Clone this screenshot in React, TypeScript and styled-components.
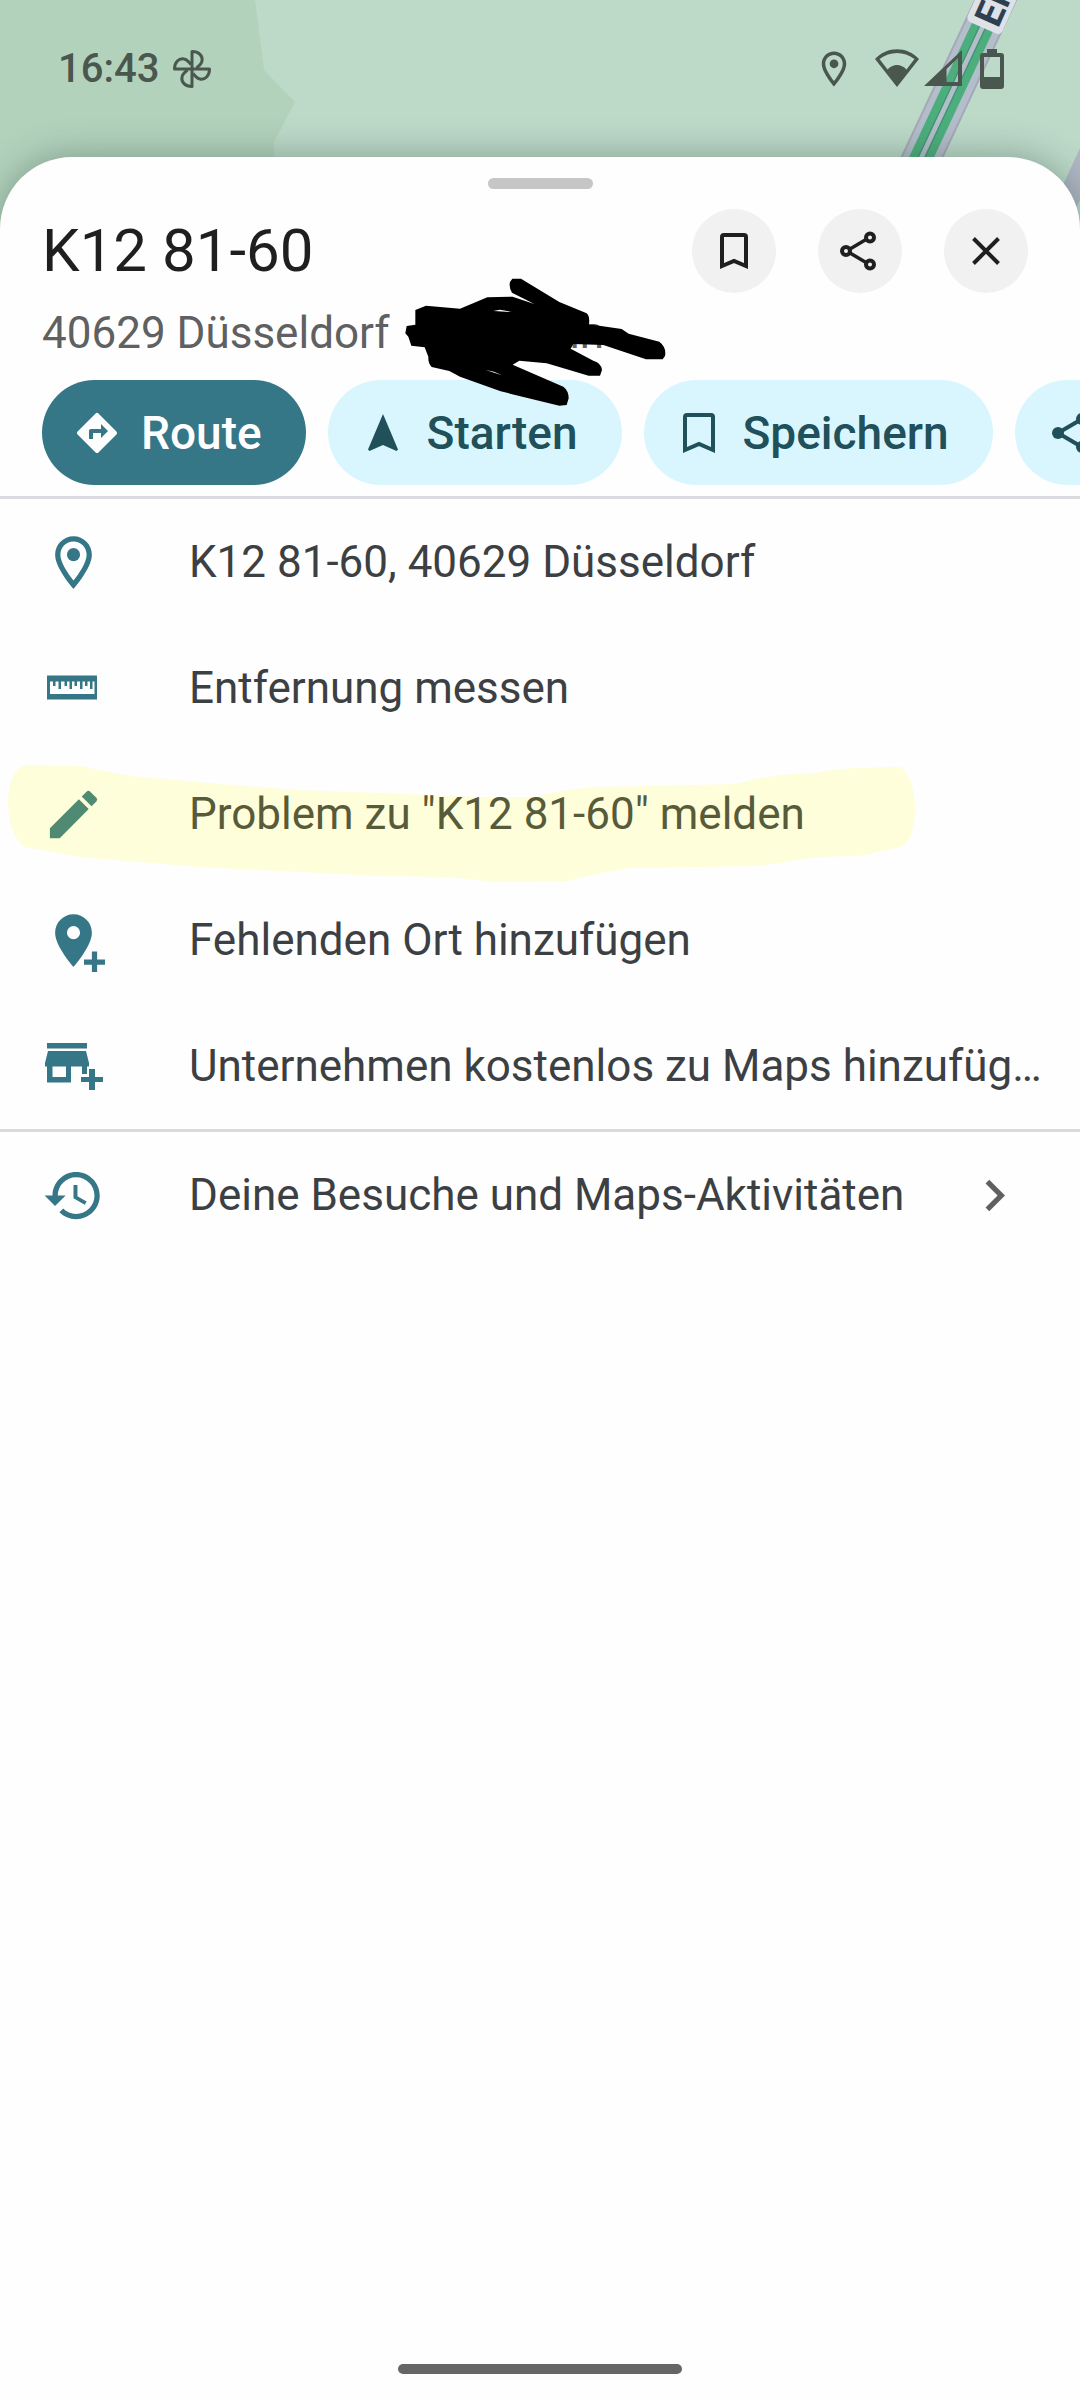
import React from "react";
import styled, { createGlobalStyle, css } from "styled-components";

const TEAL = "#357786";
const DEEP_TEAL = "#20505a";

const GlobalStyle = createGlobalStyle`
  * { box-sizing: border-box; }
  body {
    margin: 0;
    background: #bdd9c8;
    font-family: Roboto, "Liberation Sans", sans-serif;
  }
  button { font: inherit; border: 0; cursor: pointer; }
`;

const Screen = styled.div`
  position: relative;
  display: flex;
  flex-direction: column;
  min-height: 100vh;
  overflow: hidden;
`;

const MapBackdrop = styled.svg`
  position: absolute;
  top: 0;
  right: 0;
  width: 1080px;
  height: 240px;
`;

const StatusBar = styled.header`
  position: relative;
  display: flex;
  align-items: center;
  justify-content: space-between;
  height: 157px;
  padding: 0 68px 20px 58px;
  color: #4a574e;
`;

const StatusGroup = styled.div<{ $gap: number }>`
  display: flex;
  align-items: center;
  gap: ${(p) => p.$gap}px;
`;

const Clock = styled.time`
  font-size: 40px;
  font-weight: 500;
`;

const Sheet = styled.main`
  position: relative;
  display: flex;
  flex: 1;
  flex-direction: column;
  border-radius: 72px 72px 0 0;
  background: #fefefe;
  box-shadow: 0 0 36px rgba(40, 70, 60, 0.4);
`;

const Handle = styled.div`
  width: 105px;
  height: 11px;
  margin: 21px auto 20px;
  border-radius: 6px;
  background: #c6c6c6;
`;

const TitleRow = styled.div`
  display: flex;
  align-items: center;
  justify-content: space-between;
  padding: 0 52px 0 42px;
`;

const Title = styled.h1`
  margin: 0;
  color: #1f1f1f;
  font-size: 60px;
  font-weight: 400;
  line-height: 84px;
`;

const Actions = styled.div`
  display: flex;
  gap: 42px;
`;

const RoundButton = styled.button`
  display: grid;
  place-items: center;
  width: 84px;
  height: 84px;
  padding: 0;
  border-radius: 50%;
  background: #f1f1f1;
  color: #1f1f1f;
`;

const Subtitle = styled.div`
  position: relative;
  z-index: 1;
  display: flex;
  gap: 141px;
  margin: 14px 42px 21px;
  color: #5f6061;
  font-size: 44px;
  line-height: 52px;
`;

const Scribble = styled.svg`
  position: absolute;
  top: -37px;
  left: 358px;
  width: 280px;
  height: 150px;
`;

const ChipRow = styled.nav`
  display: flex;
  gap: 22px;
  padding: 0 0 11px 42px;
  overflow: hidden;
  border-bottom: 3px solid #dadbe0;
`;

const Chip = styled.button<{ $primary?: boolean }>`
  display: flex;
  flex: none;
  align-items: center;
  gap: 20px;
  height: 105px;
  padding: 0 44px 0 31px;
  border-radius: 53px;
  background: ${(p) => (p.$primary ? TEAL : "#d9f6fe")};
  color: ${(p) => (p.$primary ? "#ffffff" : DEEP_TEAL)};
  font-size: 46px;
  font-weight: 500;
`;

const List = styled.ul`
  margin: 0;
  padding: 0;
  list-style: none;

  & + & {
    border-top: 3px solid #dadadb;
  }
`;

const ListItem = styled.li`
  position: relative;
`;

const RowButton = styled.button`
  display: flex;
  align-items: center;
  width: 100%;
  height: 126px;
  padding: 0 36px 0 42px;
  background: transparent;
  color: ${TEAL};
  text-align: left;
`;

const Label = styled.span`
  flex: 1;
  min-width: 0;
  margin-left: 84px;
  overflow: hidden;
  color: #3c4043;
  font-size: 44px;
  line-height: 60px;
  text-overflow: ellipsis;
  white-space: nowrap;
`;

const Trailing = styled.span`
  display: flex;
  margin: 0 18px 0 24px;
`;

const Marker = styled.svg`
  position: absolute;
  top: -11px;
  left: 0;
  width: 1080px;
  height: 160px;
  pointer-events: none;
`;

const HomeBar = styled.div`
  width: 284px;
  height: 10px;
  margin: auto auto 26px;
  border-radius: 5px;
  background: #666666;
`;

const Glyph = styled.svg<{ $size: number; $tone?: string }>`
  flex: none;
  width: ${(p) => p.$size}px;
  height: ${(p) => p.$size}px;
  fill: currentColor;
  ${(p) => p.$tone && css`color: ${p.$tone};`}
`;

const PIN =
  "M12 2C8.13 2 5 5.13 5 9c0 5.25 7 13 7 13s7-7.75 7-13c0-3.87-3.13-7-7-7z";

const PinOutline = ({ size }: { size: number }) => (
  <Glyph $size={size} viewBox="0 0 24 24" aria-hidden="true">
    <path
      fillRule="evenodd"
      d={`${PIN}M7 9c0-2.76 2.24-5 5-5s5 2.24 5 5c0 2.88-2.88 7.19-5 9.88C9.92 16.21 7 11.85 7 9z`}
    />
    <circle cx="12" cy="9" r="2.5" />
  </Glyph>
);

const Fan = () => (
  <Glyph $size={40} viewBox="0 0 40 40" aria-hidden="true">
    <g fill="none" stroke="currentColor" strokeWidth="3" strokeLinejoin="round">
      {[0, 90, 180, 270].map((angle) => (
        <path
          key={angle}
          transform={`rotate(${angle} 20 20)`}
          d="M20 20V2.500C27 2.500 31 7 30 12C29.500 15 27 17 24.500 19"
        />
      ))}
    </g>
  </Glyph>
);

const Wifi = () => (
  <Glyph $size={44} viewBox="0 0 44 44" aria-hidden="true">
    <path
      fillRule="evenodd"
      d="M22 40L0 12C12 -1 32 -1 44 12zM12.500 22.500C18 16.500 26 16.500 31.500 22.500L39.500 12C29 4 15 4 4.500 12z"
    />
  </Glyph>
);

const Signal = () => (
  <Glyph $size={38} viewBox="0 0 38 38" aria-hidden="true">
    <path fillRule="evenodd" d="M0 36L38 0V36zM22.500 19V32H34V8z" />
  </Glyph>
);

const Battery = () => (
  <Glyph $size={40} viewBox="0 0 40 40" aria-hidden="true">
    <path
      fillRule="evenodd"
      d="M15 0h10v4h4q3 0 3 3v30q0 3-3 3H11q-3 0-3-3V7q0-3 3-3h4zM12 8v20h16V8z"
    />
  </Glyph>
);

const Bookmark = ({ size, stroke }: { size: number; stroke: number }) => (
  <Glyph $size={size} viewBox="0 0 24 24" aria-hidden="true">
    <path
      fill="none"
      stroke="currentColor"
      strokeWidth={stroke}
      d="M6 19.500V5q0-1 1-1h10q1 0 1 1v14.500L12 17z"
    />
  </Glyph>
);

const BookmarkWide = () => (
  <Glyph $size={48} viewBox="0 0 48 48" aria-hidden="true">
    <path
      fill="none"
      stroke="currentColor"
      strokeWidth="4"
      d="M10 41V8q0-2 2-2h24q2 0 2 2v33L24 35z"
    />
  </Glyph>
);

const ShareOutline = () => (
  <Glyph $size={48} viewBox="0 0 48 48" aria-hidden="true">
    <g fill="none" stroke="currentColor" strokeWidth="4">
      <circle cx="34" cy="10.500" r="4" />
      <circle cx="10" cy="24" r="4" />
      <circle cx="34" cy="37.500" r="4" />
      <path d="M14 22L30 12.500M14 26L30 35.500" strokeWidth="3.500" />
    </g>
  </Glyph>
);

const ShareFilled = () => (
  <Glyph $size={48} viewBox="0 0 48 48" aria-hidden="true">
    <path d="M12 24L36 10M12 24L36 38" stroke="currentColor" strokeWidth="4" />
    <circle cx="12" cy="24" r="6" />
    <circle cx="36" cy="10" r="6" />
    <circle cx="36" cy="38" r="6" />
  </Glyph>
);

const Close = () => (
  <Glyph $size={48} viewBox="0 0 48 48" aria-hidden="true">
    <path d="M11.500 11.500L36.500 36.500M36.500 11.500L11.500 36.500" stroke="currentColor" strokeWidth="4" />
  </Glyph>
);

const Directions = () => (
  <Glyph $size={48} viewBox="0 0 24 24" aria-hidden="true">
    <path d="M21.710 11.290l-9-9a1 1 0 0 0-1.420 0l-9 9a1 1 0 0 0 0 1.420l9 9c.39.39 1.010.39 1.420 0l9-9a1 1 0 0 0 0-1.420zM14 14.500V12h-4v3H8v-4c0-.55.45-1 1-1h5V7.500l3.500 3.500-3.500 3.500z" />
  </Glyph>
);

const Navigate = () => (
  <Glyph $size={48} viewBox="0 0 48 48" aria-hidden="true">
    <path d="M24 5L9 40.500L10.500 42L24 36L37.500 42L39 40.500z" />
  </Glyph>
);

const Ruler = () => (
  <Glyph $size={63} viewBox="0 0 63 63" aria-hidden="true">
    <path
      fillRule="evenodd"
      d="M5 18.500H55V42.500H5zM8 24.500V37H52.500V24.500H50.500V32H48V24.500H45.500V29H43V24.500H40.500V32H38V24.500H35V29H32.500V24.500H30V32H27.500V24.500H25V29H22.500V24.500H19V32H16.500V24.500H13.500V29H11V24.500z"
    />
  </Glyph>
);

const Pencil = () => (
  <Glyph $size={63} viewBox="0 0 24 24" aria-hidden="true">
    <path d="M3 17.250V21h3.750L17.810 9.940l-3.750-3.750L3 17.250zM20.710 7.040a1 1 0 0 0 0-1.410l-2.340-2.340a1 1 0 0 0-1.410 0l-1.830 1.830 3.750 3.750 1.830-1.830z" />
  </Glyph>
);

const PinAdd = () => (
  <Glyph $size={63} viewBox="0 0 24 24" aria-hidden="true">
    <path fillRule="evenodd" d={`${PIN}M12 11.500a2.500 2.500 0 1 0 0-5 2.500 2.500 0 0 0 0 5z`} />
    <path d="M19 16.200h2v3h3v2h-3v3h-2v-3h-3v-2h3z" />
  </Glyph>
);

const StoreAdd = () => (
  <Glyph $size={63} viewBox="0 0 63 63" aria-hidden="true">
    <path
      fillRule="evenodd"
      d="M5 8H45V13.500H5zM6 16H44L47 28V31.500H45V39H40V31.500H29V47.500H5V31.500H3V28zM10.500 31.500V42H24V31.500z"
    />
    <path d="M47 34h6v8h8v5h-8v8h-6v-8h-8v-5h8z" />
  </Glyph>
);

const History = () => (
  <Glyph $size={63} viewBox="0 0 24 24" aria-hidden="true">
    <path d="M13 3c-4.970 0-9 4.030-9 9H1l3.890 3.890.07.14L9 12H6c0-3.870 3.130-7 7-7s7 3.130 7 7-3.130 7-7 7c-1.930 0-3.680-.79-4.940-2.060l-1.420 1.420C8.270 19.990 10.510 21 13 21c4.970 0 9-4.030 9-9s-4.030-9-9-9zm-1 5v5l4.280 2.540.72-1.210-3.500-2.080V8H12z" />
  </Glyph>
);

const Chevron = () => (
  <Glyph $size={63} $tone="#5f6061" viewBox="0 0 24 24" aria-hidden="true">
    <path d="M8.590 16.590L13.170 12 8.590 7.410 10 6l6 6-6 6z" />
  </Glyph>
);

const places = [
  { icon: <PinOutline size={63} />, text: "K12 81-60, 40629 Düsseldorf" },
  { icon: <Ruler />, text: "Entfernung messen" },
  { icon: <Pencil />, text: 'Problem zu "K12 81-60" melden', marked: true },
  { icon: <PinAdd />, text: "Fehlenden Ort hinzufügen" },
  { icon: <StoreAdd />, text: "Unternehmen kostenlos zu Maps hinzufügen" },
];

export default function App() {
  return (
    <Screen>
      <GlobalStyle />
      <MapBackdrop viewBox="0 0 1080 240" aria-hidden="true">
        <path fill="#bdd9c8" d="M0 0H1080V240H0z" />
        <path fill="#b3d2bc" d="M0 0H255L264 70L295 102L274 142L276 240H0z" />
        <path d="M1006 -22L902 200" stroke="#a5a8b8" strokeWidth="39" />
        <path d="M1006 -22L902 200" stroke="#b4bdca" strokeWidth="35" />
        <path d="M998 -22L894 200M1013 -22L909 200" stroke="#4cae7c" strokeWidth="9" />
        <path d="M1002 -22L898 200M1009 -22L905 200" stroke="#478a77" strokeWidth="1" />
        <path fill="#b0b6c4" d="M1080 148L1058 196L1070 220L1080 200z" />
        <g transform="translate(998 29) rotate(-66)">
          <rect x="-5" y="-33" width="80" height="38" rx="5" fill="#dde1e8" />
          <text fontSize="38" fontWeight="700" fill="#2e3f4f">El</text>
        </g>
      </MapBackdrop>
      <StatusBar>
        <StatusGroup $gap={13}>
          <Clock>16:43</Clock>
          <Fan />
        </StatusGroup>
        <StatusGroup $gap={5}>
          <StatusGroup $gap={20}>
            <PinOutline size={42} />
            <Wifi />
          </StatusGroup>
          <StatusGroup $gap={10}>
            <Signal />
            <Battery />
          </StatusGroup>
        </StatusGroup>
      </StatusBar>
      <Sheet>
        <Handle />
        <TitleRow>
          <Title>K12 81-60</Title>
          <Actions>
            <RoundButton aria-label="Speichern">
              <Bookmark size={48} stroke={2} />
            </RoundButton>
            <RoundButton aria-label="Teilen">
              <ShareOutline />
            </RoundButton>
            <RoundButton aria-label="Schließen">
              <Close />
            </RoundButton>
          </Actions>
        </TitleRow>
        <Subtitle>
          <span>40629 Düsseldorf</span>
          <span>min</span>
          <Scribble viewBox="0 0 840 450" aria-hidden="true">
            <path
              fillRule="evenodd"
              d="M46 120L78 107L180 116L262 82L338 80L403 102L336 68Q326 52 330 36L337 26L363 26L478 96L560 130Q570 138 567 163L665 177L686 191L778 215Q800 232 795 258L788 268L738 268L610 225L520 222L512 236L580 272Q605 280 606 300L600 317L566 317L440 280L358 272L338 284L490 350Q506 362 506 385L500 405L478 407L302 364L180 320L148 303L95 291Q84 280 85 260L74 232L34 227L25 200L16 190L20 168L46 164zM280 123L300 119L336 126zM257 300L282 305L306 316z"
            />
          </Scribble>
        </Subtitle>
        <ChipRow>
          <Chip $primary>
            <Directions />
            Route
          </Chip>
          <Chip>
            <Navigate />
            Starten
          </Chip>
          <Chip>
            <BookmarkWide />
            Speichern
          </Chip>
          <Chip aria-label="Teilen">
            <ShareFilled />
          </Chip>
        </ChipRow>
        <List>
          {places.map((place) => (
            <ListItem key={place.text}>
              <RowButton>
                {place.icon}
                <Label>{place.text}</Label>
              </RowButton>
              {place.marked && (
                <Marker viewBox="0 740 1080 160" aria-hidden="true">
                  <path
                    fill="#ffff00"
                    fillOpacity="0.14"
                    d="M8 800Q10 768 26 765L80 766L130 776L220 784L300 790L380 793L480 797L535 797Q560 789 600 787L735 784Q770 774 815 773Q840 767 900 767Q914 775 915 810Q914 842 900 847L860 856L815 857L760 866L630 868Q600 872 568 881L495 882L450 877L380 876L200 867L80 857L25 847Q8 835 8 800z"
                  />
                </Marker>
              )}
            </ListItem>
          ))}
        </List>
        <List>
          <ListItem>
            <RowButton>
              <History />
              <Label>Deine Besuche und Maps-Aktivitäten</Label>
              <Trailing>
                <Chevron />
              </Trailing>
            </RowButton>
          </ListItem>
        </List>
        <HomeBar />
      </Sheet>
    </Screen>
  );
}
